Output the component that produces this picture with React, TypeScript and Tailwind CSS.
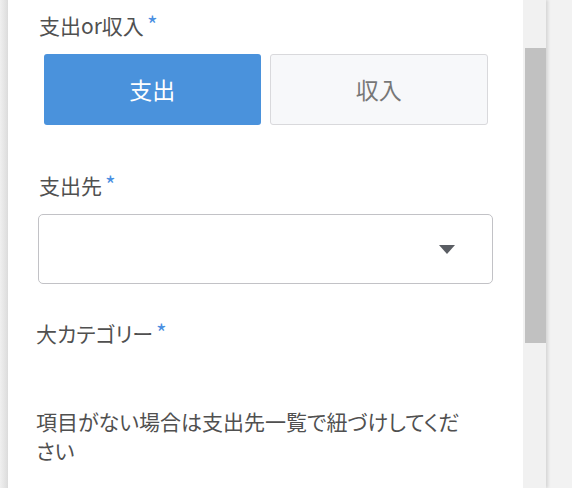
import React from "react";

const font = {
  fontFamily: '"Noto Sans CJK JP", "Noto Sans", sans-serif',
  fontFeatureSettings: '"palt"',
};

function Label({ text }: { text: string }) {
  return (
    <p className="text-[21px] leading-[30px] text-[#505050]">
      {text}
      <span className="ml-[3px] text-[23px] leading-none text-[#4a90e2]">*</span>
    </p>
  );
}

export default function App() {
  return (
    <div className="flex h-[488px] w-[572px] overflow-hidden bg-[#f2f2f2]" style={font}>
      <div className="w-[8px] shrink-0 bg-gradient-to-r from-[#f0f0f0] to-[#dcdcdc]" />
      <div className="flex w-[538px] shrink-0 shadow-[2px_0_3px_rgba(0,0,0,0.12)]">
        <div className="flex-1 bg-white pl-[31px] pr-[30px] pt-[10px]">
          <Label text="支出or収入" />
          <div className="mt-[14px] flex gap-[9px] px-[5px]">
            <button className="flex h-[71px] flex-1 items-center justify-center rounded-[3px] bg-[#4a92dc] text-[23px] text-white">
              支出
            </button>
            <button className="flex h-[71px] flex-1 items-center justify-center rounded-[3px] border border-[#d9d9dc] bg-[#f7f8fa] text-[23px] text-[#777]">
              収入
            </button>
          </div>

          <div className="mt-[45px]">
            <Label text="支出先" />
          </div>
          <div className="mt-[14px] -ml-[1px] flex h-[70px] items-center justify-end rounded-[5px] border border-[#c2c2c6] pr-[37px]">
            <svg width="16" height="9" viewBox="0 0 16 9">
              <path d="M0 0 H16 L8 9 Z" fill="#5a5d63" />
            </svg>
          </div>

          <div className="mt-[34px] -ml-[3px]">
            <Label text="大カテゴリー" />
          </div>

          <p className="mt-[59px] -ml-[3px] w-[440px] text-[21px] leading-[29px] text-[#505050]">
            項目がない場合は支出先一覧で紐づけしてください
          </p>
        </div>
        <div className="w-[23px] shrink-0 bg-[#f1f1f1] pl-[2px] pt-[48px]">
          <div className="h-[295px] w-[21px] bg-[#c1c1c1]" />
        </div>
      </div>
    </div>
  );
}
